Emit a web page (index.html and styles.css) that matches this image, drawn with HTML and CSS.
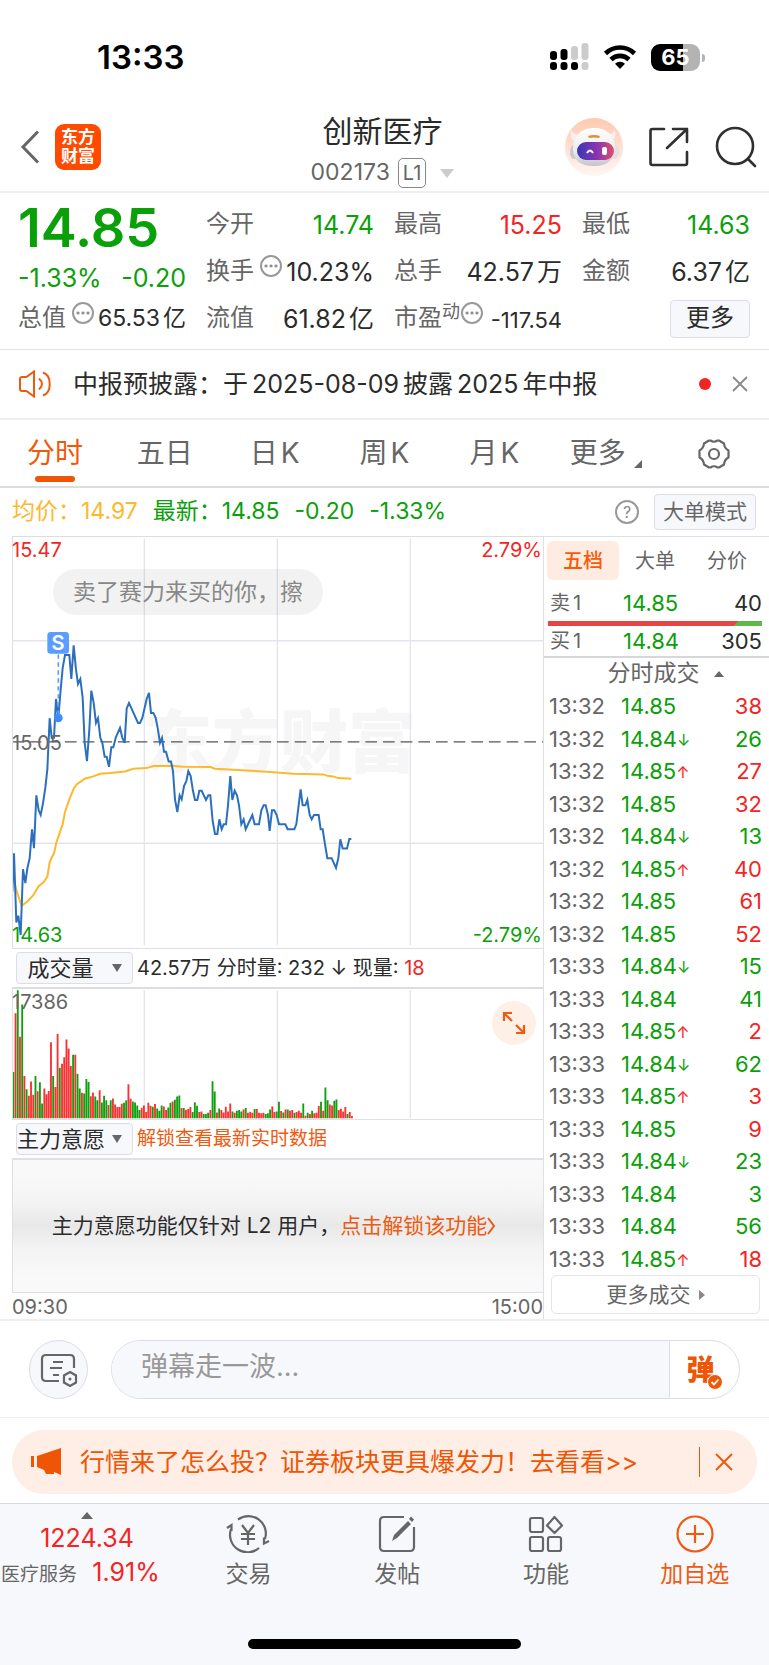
FILE: index.html
```html
<!DOCTYPE html>
<html lang="zh-CN">
<head>
<meta charset="utf-8">
<meta name="viewport" content="width=device-width, initial-scale=1">
<title>创新医疗 002173</title>
<link rel="stylesheet" href="styles.css">
</head>
<body>
<div class="status">
  <span class="clock">13:33</span>
  <div class="status-icons">
    <svg width="39" height="28" viewBox="0 0 39 28">
      <g fill="#000"><rect x="0" y="8" width="7" height="9" rx="3"/><rect x="10.500" y="6" width="7" height="11" rx="3"/><rect x="0" y="19" width="7" height="8" rx="3"/><rect x="10.500" y="19" width="7" height="8" rx="3"/><rect x="21" y="19" width="7" height="8" rx="3"/></g>
      <g fill="#ccc"><rect x="21" y="3" width="7" height="14" rx="3"/><rect x="31.500" y="0" width="7" height="17" rx="3"/><rect x="31.500" y="19" width="7" height="8" rx="3"/></g>
    </svg>
    <svg width="34" height="26" viewBox="0 0 34 26" fill="none" stroke="#000" stroke-width="4.600"><path d="M2.500 9.500a20.500 20.500 0 0 1 29 0M8 15.500a13 13 0 0 1 18 0"/><path d="M17 25l-5-5.300a7.500 7.500 0 0 1 10 0z" fill="#000" stroke="none"/></svg>
    <div class="battery"><span>65</span></div>
  </div>
</div>

<header class="header">
  <div class="head-left">
    <button class="icon-btn" aria-label="返回"><svg width="20" height="34" viewBox="0 0 20 34" fill="none" stroke="#666" stroke-width="3"><path d="M18 1.500L3 17l15 15.500"/></svg></button>
    <div class="logo">东方<br>财富</div>
  </div>
  <div class="head-title">
    <h1>创新医疗</h1>
    <div class="code"><span>002173</span><span class="level">L1</span><i class="tri-down pale"></i></div>
  </div>
  <div class="head-right">
    <button class="icon-btn" aria-label="智能助手">
      <svg width="58" height="58" viewBox="0 0 58 58">
        <defs>
          <linearGradient id="halo" x1="0" y1="0" x2="0" y2="1"><stop offset="0" stop-color="#ffc9b0"/><stop offset="1" stop-color="#fff6f2"/></linearGradient>
          <linearGradient id="visor" x1="0" y1="0" x2="1" y2="0"><stop offset="0" stop-color="#3a35b4"/><stop offset=".55" stop-color="#8a35b0"/><stop offset="1" stop-color="#e0506e"/></linearGradient>
          <linearGradient id="helmet" x1="0" y1="0" x2="0" y2="1"><stop offset="0" stop-color="#fff"/><stop offset=".6" stop-color="#ecebee"/><stop offset="1" stop-color="#c4c4cc"/></linearGradient>
        </defs>
        <circle cx="29" cy="29" r="29" fill="url(#halo)"/>
        <path d="M6 12q-2 9 5 12l5-7q-8 0-10-5zM50 12q2 9-5 12l-5-7q8 0 10-5z" fill="#f3f1f3"/>
        <ellipse cx="9" cy="34" rx="4" ry="7" fill="#c9c8d0"/><ellipse cx="50" cy="34" rx="4" ry="7" fill="#e2e0e5"/>
        <path d="M8 31C8 17 17 10 29 10s21 7 21 21c0 10-7 17-21 17S8 42 8 31z" fill="url(#helmet)"/>
        <rect x="12" y="24" width="37" height="18" rx="9" fill="url(#visor)"/>
        <path d="M23 18q6-2 12 0l-1 2q-5-1-10 0z" fill="#e78b3c"/>
        <path d="M22 35q3-5 6 0" fill="none" stroke="#fff" stroke-width="2"/><rect x="37" y="29" width="5" height="8" rx="2" fill="#fff"/>
      </svg>
    </button>
    <button class="icon-btn" aria-label="分享"><svg width="40" height="40" viewBox="0 0 40 40" fill="none" stroke="#303030" stroke-width="2.600" stroke-linecap="round" stroke-linejoin="round"><path d="M15 2H3.500Q1.500 2 1.500 4v32q0 2 2 2H36q2 0 2-2V25M24 2h14v13M38 2L18 21"/></svg></button>
    <button class="icon-btn" aria-label="搜索"><svg width="42" height="42" viewBox="0 0 42 42" fill="none" stroke="#303030" stroke-width="2.600" stroke-linecap="round"><circle cx="20" cy="20" r="18"/><path d="M33 33l7 7"/></svg></button>
  </div>
</header>

<section class="quote">
  <div class="q-col">
    <div class="price green">14.85</div>
    <div class="change green"><span>-1.33%</span><span>-0.20</span></div>
    <div class="cell compact"><span>总值</span><i class="dots"></i><b>65.53<i class="unit">亿</i></b></div>
  </div>
  <div class="q-col">
    <div class="cell"><span>今开</span><b class="green">14.74</b></div>
    <div class="cell"><span>换手</span><i class="dots"></i><b>10.23%</b></div>
    <div class="cell"><span>流值</span><b>61.82<i class="unit">亿</i></b></div>
  </div>
  <div class="q-col">
    <div class="cell"><span>最高</span><b class="red">15.25</b></div>
    <div class="cell"><span>总手</span><b>42.57<i class="unit">万</i></b></div>
    <div class="cell small"><span>市盈<sup>动</sup></span><i class="dots"></i><b>-117.54</b></div>
  </div>
  <div class="q-col">
    <div class="cell"><span>最低</span><b class="green">14.63</b></div>
    <div class="cell"><span>金额</span><b>6.37<i class="unit">亿</i></b></div>
    <div class="cell end"><button class="more-btn">更多</button></div>
  </div>
</section>

<section class="news">
  <svg width="34" height="28" viewBox="0 0 34 28" fill="none" stroke="#ee5a10" stroke-width="2"><path d="M15 1.500v25L7.500 21H3q-2 0-2-2V9q0-2 2-2h4.500zM20 8.500q6 5.500 0 11M24 2.500c9 3 9 20 0 23"/></svg>
  <p>中报预披露：于<span class="latin">2025-08-09</span>披露<span class="latin">2025</span>年中报</p>
  <i class="dot"></i>
  <button class="icon-btn" aria-label="关闭公告"><svg width="16" height="16" viewBox="0 0 16 16" stroke="#888" stroke-width="1.800"><path d="M1 1l14 14M15 1L1 15"/></svg></button>
</section>

<nav class="tabs">
  <button class="active">分时</button><button>五日</button><button>日<i class="unit">K</i></button><button>周<i class="unit">K</i></button><button>月<i class="unit">K</i></button>
  <button class="has-corner">更多<i class="corner"></i></button>
  <button aria-label="设置"><svg width="32" height="30" viewBox="0 0 32 30" fill="none" stroke="#666" stroke-width="2.200" stroke-linejoin="round"><path d="M11 1.500h1.500q3.500 2.500 7 0H21l5 3q.5 5 4.500 7v7q-4 2-4.500 7l-5 3h-1.500q-3.500-2.500-7 0H11l-5-3q-.5-5-4.500-7v-7q4-2 4.500-7z"/><circle cx="16" cy="15" r="5"/></svg></button>
</nav>

<section class="info">
  <span class="amber">均价：14.97</span>
  <span class="green">最新：14.85</span><span class="green">-0.20</span><span class="green">-1.33%</span>
  <button class="help" aria-label="帮助">?</button>
  <button class="mode">大单模式</button>
</section>

<main class="main">
  <div class="charts">
    <div class="pricechart">
      <span class="watermark">东方财富</span>
      <svg class="plot" viewBox="0 0 530 412" preserveAspectRatio="none">
        <g transform="translate(-13 -7) scale(.33333)" fill="none">
          <path d="M433 26V1248M832 26V1248M1231 26V1248M37 333H1630M37 942H1630" stroke="#e3e4ee" stroke-width="4"/>
          <path d="M36 637H1630" stroke="#555" stroke-width="3.500" stroke-dasharray="35 18"/>
          <polyline stroke="#fdb92e" stroke-width="6" points="42,1055 50,1085 58,1110 65,1130 82,1117 100,1098 115,1072 130,1060 142,1042 149,1000 155,985 162,973 169,940 188,885 195,848 208,810 221,778 230,765 254,748 280,741 300,733 330,731 375,726 400,718 440,716 460,710 515,709 550,712 632,713 645,718 700,721 800,727 880,733 970,735 985,740 1000,741 1015,746 1054,748"/>
          <polyline stroke="#2c70bd" stroke-width="6" points="37,1088 42,972 49,1180 55,1160 62,1218 69,1020 76,1062 82,1018 89,987 96,900 102,957 109,798 116,843 122,857 129,822 136,775 142,720 149,566 155,625 162,625 168,508 175,565 182,480 188,415 195,376 208,376 214,448 221,347 228,420 234,463 241,448 248,505 254,640 261,695 268,600 274,483 281,520 288,580 294,566 301,625 307,640 314,682 320,682 327,712 334,653 340,653 347,625 360,595 367,625 374,640 380,537 387,520 414,580 420,580 427,565 440,508 447,490 453,550 460,550 467,565 473,595 480,640 486,625 492,667 498,667 506,696 513,696 519,725 525,810 532,848 539,798 545,810 552,770 559,755 565,725 572,740 579,785 585,812 592,812 598,784 605,784 618,812 625,798 631,798 638,875 645,914 652,914 658,870 665,900 671,885 678,885 684,828 691,740 697,812 704,784 711,798 717,828 724,885 731,870 737,900 757,857 764,885 777,885 784,843 791,828 797,828 804,857 809,905 816,843 823,843 830,857 837,885 856,885 863,900 883,900 889,885 896,828 902,780 908,828 916,828 922,812 929,857 935,870 942,857 956,857 962,900 968,900 975,945 982,987 995,987 1008,1016 1015,987 1021,930 1028,958 1041,958 1048,929 1054,929"/>
          <path d="M175 374V560" stroke="#5b9dff" stroke-width="5" stroke-dasharray="13 11"/>
          <circle cx="175" cy="565" r="13" fill="#3f8cf8"/>
          <rect x="142" y="307" width="65" height="65" rx="10" fill="#5b9dff"/>
          <text x="174" y="362" class="mark">S</text>
        </g>
      </svg>
      <span class="lab tl red">15.47</span><span class="lab tr red">2.79%</span>
      <span class="lab ml">15.05</span>
      <span class="lab bl green">14.63</span><span class="lab br green">-2.79%</span>
      <span class="bubble">卖了赛力来买的你，擦</span>
    </div>
    <div class="subhead">
      <label class="pick"><select aria-label="指标一"><option>成交量</option></select></label>
      <span class="stat">42.57万 分时量: 232 ↓ 现量: <em class="red">18</em></span>
    </div>
    <div class="volchart">
      <svg class="plot" viewBox="0 0 530 131" preserveAspectRatio="none">
        <g transform="translate(-13 -48) scale(.33333)" fill="none">
          <path d="M433 148V535M832 148V535M1231 148V535" stroke="#e3e4ee" stroke-width="4"/>
          <path id="vol-up" stroke="#fb3131" stroke-width="5.600"/>
          <path id="vol-down" stroke="#0fa00f" stroke-width="5.600"/>
        </g>
      </svg>
      <span class="lab tl">17386</span>
      <button class="expand" aria-label="全屏"><svg width="24" height="24" viewBox="0 0 24 24" fill="none" stroke="#ee5a10" stroke-width="2.200"><path d="M10 2H2v8M2 2l8 8M14 22h8v-8M22 22l-8-8"/></svg></button>
    </div>
    <div class="subhead">
      <label class="pick"><select aria-label="指标二"><option>主力意愿</option></select></label>
      <a class="orange" href="#">解锁查看最新实时数据</a>
    </div>
    <div class="locked"><p>主力意愿功能仅针对 L2 用户，<a class="orange" href="#">点击解锁该功能<svg width="9" height="18" viewBox="0 0 9 18" fill="none" stroke="currentColor" stroke-width="2"><path d="M1 1l6 8-6 8"/></svg></a></p></div>
    <div class="times"><span>09:30</span><span>15:00</span></div>
  </div>

  <aside class="side">
    <div class="side-tabs"><button class="active">五档</button><button>大单</button><button>分价</button></div>
    <div class="level-row ask"><span>卖<i class="unit">1</i></span><b class="green">14.85</b><b>40</b></div>
    <div class="ratio"></div>
    <div class="level-row bid"><span>买<i class="unit">1</i></span><b class="green">14.84</b><b>305</b></div>
    <div class="deal-title">分时成交<i class="tri-up"></i></div>
    <table class="deals"><tbody>
      <tr><td>13:32</td><td>14.85</td><td class="red">38</td></tr>
      <tr><td>13:32</td><td>14.84<i class="down"></i></td><td class="green">26</td></tr>
      <tr><td>13:32</td><td>14.85<i class="up"></i></td><td class="red">27</td></tr>
      <tr><td>13:32</td><td>14.85</td><td class="red">32</td></tr>
      <tr><td>13:32</td><td>14.84<i class="down"></i></td><td class="green">13</td></tr>
      <tr><td>13:32</td><td>14.85<i class="up"></i></td><td class="red">40</td></tr>
      <tr><td>13:32</td><td>14.85</td><td class="red">61</td></tr>
      <tr><td>13:32</td><td>14.85</td><td class="red">52</td></tr>
      <tr><td>13:33</td><td>14.84<i class="down"></i></td><td class="green">15</td></tr>
      <tr><td>13:33</td><td>14.84</td><td class="green">41</td></tr>
      <tr><td>13:33</td><td>14.85<i class="up"></i></td><td class="red">2</td></tr>
      <tr><td>13:33</td><td>14.84<i class="down"></i></td><td class="green">62</td></tr>
      <tr><td>13:33</td><td>14.85<i class="up"></i></td><td class="red">3</td></tr>
      <tr><td>13:33</td><td>14.85</td><td class="red">9</td></tr>
      <tr><td>13:33</td><td>14.84<i class="down"></i></td><td class="green">23</td></tr>
      <tr><td>13:33</td><td>14.84</td><td class="green">3</td></tr>
      <tr><td>13:33</td><td>14.84</td><td class="green">56</td></tr>
      <tr><td>13:33</td><td>14.85<i class="up"></i></td><td class="red">18</td></tr>
    </tbody></table>
    <button class="more-deals">更多成交<i class="tri-right"></i></button>
  </aside>
</main>

<section class="danmu">
  <button class="danmu-set" aria-label="弹幕设置"><svg width="38" height="34" viewBox="0 0 38 34" fill="none" stroke="#666" stroke-width="2.200"><path d="M19 28H6q-4 0-4-4V6q0-4 4-4h24q4 0 4 4v9M13 9h10M10 15h12M13 22h6"/><path d="M30 19l6 3.500v7L30 33l-6-3.500v-7z"/><circle cx="30" cy="26" r="1.500" fill="#666" stroke="none"/></svg></button>
  <div class="danmu-box">
    <input type="text" aria-label="弹幕" placeholder="弹幕走一波...">
    <button aria-label="弹幕开关"><span class="dan">弹<svg width="16" height="16" viewBox="0 0 16 16"><circle cx="8" cy="8" r="7.500" fill="#ee5a0a" stroke="#fff"/><path d="M4.500 8l2.500 2.500 4.500-5" fill="none" stroke="#fff" stroke-width="1.800"/></svg></span></button>
  </div>
</section>

<section class="promo">
  <div class="banner">
    <svg width="31" height="28" viewBox="0 0 31 28" fill="#ee5504"><path d="M0 8h3v11H0zM6 8L30 0v27l-7-3v2h-8l-2-4-7-3z"/></svg>
    <a href="#">行情来了怎么投？证券板块更具爆发力！去看看&gt;&gt;</a>
    <i class="bar"></i>
    <button class="icon-btn" aria-label="关闭"><svg width="18" height="18" viewBox="0 0 18 18" stroke="#ee5504" stroke-width="1.800"><path d="M1 1l16 16M17 1L1 17"/></svg></button>
  </div>
</section>

<footer class="footer">
  <nav class="bottom">
    <a class="index" href="#"><i class="tri-up"></i><strong class="red">1224.34</strong><span>医疗服务 <em class="red">1.91%</em></span></a>
    <a href="#"><svg width="44" height="38" viewBox="0 0 44 38" fill="none" stroke="#666" stroke-width="2.200"><path d="M12 4.500A17.500 17.500 0 0 1 39 24M33 33A17.500 17.500 0 0 1 5 14"/><path d="M1 13l4.500-3v6M43 26l-5 2.500v-6"/><path d="M16 10l6 8 6-8M15 19h14M15 24h14M22 18v12"/></svg>交易</a>
    <a href="#"><svg width="38" height="38" viewBox="0 0 38 38" fill="none" stroke="#666" stroke-width="2.200"><path d="M26 2H6Q2 2 2 6v26q0 4 4 4h26q4 0 4-4V12"/><path d="M14 26l2-6L30 6l3 3-14 14zM31 4l2-2.500 3 3L34 7z" fill="#666" stroke="none"/></svg>发帖</a>
    <a href="#"><svg width="36" height="38" viewBox="0 0 36 38" fill="none" stroke="#666" stroke-width="2.200" stroke-linejoin="round"><rect x="2" y="3" width="13" height="14" rx="2"/><rect x="2" y="22" width="13" height="14" rx="2"/><rect x="20" y="22" width="13" height="14" rx="2"/><path d="M26.500 2l7.500 8.500-7.500 7.500-7.500-7.500z"/></svg>功能</a>
    <a class="orange" href="#"><svg width="38" height="38" viewBox="0 0 38 38" fill="none" stroke="#ee5a10" stroke-width="2.200"><circle cx="19" cy="19" r="17.500"/><path d="M19 10v18M10 19h18"/></svg>加自选</a>
  </nav>
  <div class="home"></div>
</footer>
<script src="app.js"></script>
</body>
</html>
```

FILE: styles.css
```css
* { box-sizing: border-box; }
body {
  margin: 0;
  background: #fff;
  color: #2b2b2b;
  font: 400 24px/1.2 Inter, "Noto Sans CJK SC", sans-serif;
}
button, input, select { font: inherit; color: inherit; background: none; border: 0; padding: 0; margin: 0; }
svg { display: block; flex: none; }
a { color: inherit; text-decoration: none; }
i, em { font-style: normal; }
b { font-weight: 400; }
h1, p { margin: 0; font-weight: 400; }
.green { color: #0aa00a; }
.red { color: #f52424; }
.amber { color: #fdb92e; }
.orange { color: #ee5a10; }
.icon-btn { display: flex; }
.unit { margin-left: 3px; }
.latin { margin: 0 4px; }

.tri-down, .tri-up, .tri-right { display: inline-block; border: 7px solid transparent; }
.tri-down { border-top: 9px solid #666; border-bottom: 0; }
.tri-down.pale { border-top-color: #ccc; }
.tri-up { border-width: 0 6px 7px; border-bottom-color: #666; }
.tri-right { border-width: 5px 0 5px 6px; border-left-color: #888; }

.status { display: flex; justify-content: space-between; align-items: center; height: 102px; padding: 12px 65px 0 97px; }
.clock { padding-top: 2px; font-size: 33px; font-weight: 600; color: #000; }
.status-icons { display: flex; align-items: center; gap: 14px; }
.battery {
  position: relative;
  display: flex; align-items: center; justify-content: center;
  width: 49px; height: 27px; margin-right: 4px; border-radius: 9px;
  background: linear-gradient(90deg, #000 65%, #b3b3b3 65%);
  color: #fff; font-size: 22px; font-weight: 700;
}
.battery::after { content: ""; position: absolute; right: -5px; top: 10px; width: 3px; height: 8px; border-radius: 0 3px 3px 0; background: #b3b3b3; }

.header { display: grid; grid-template-columns: 1fr auto 1fr; align-items: center; height: 91px; padding: 0 16px 0 12px; border-bottom: 2px solid #eee; }
.head-left { display: flex; align-items: center; gap: 15px; padding-left: 8px; }
.logo { width: 46px; height: 46px; padding-top: 4px; border-radius: 9px; background: #ff4a00; color: #fff; font-size: 17px; font-weight: 700; line-height: 19px; text-align: center; }
.head-title { display: flex; flex-direction: column; align-items: center; gap: 5px; padding-top: 4px; }
.head-title h1 { font-size: 30px; line-height: 44px; }
.code { display: flex; align-items: center; color: #666; font-size: 23px; }
.level { margin: 0 14px 0 8px; padding: 0 4px; border: 1px solid #888; border-radius: 5px; font-size: 20px; line-height: 28px; }
.head-right { display: flex; align-items: center; justify-content: flex-end; gap: 26px; margin-right: -4px; }

.quote { display: grid; grid-template-columns: repeat(4, minmax(0, 1fr)); gap: 20px; padding: 8px 19px 7px 18px; border-bottom: 1px solid #e2e2e2; }
.price { height: 54px; font-size: 54px; line-height: 54px; font-weight: 600; }
.change { display: flex; justify-content: space-between; height: 40px; padding-top: 7px; line-height: 32px; font-size: 25px; }
.cell { display: flex; align-items: center; height: 47px; white-space: nowrap; }
.cell span { color: #666; }
.cell b { margin-left: auto; font-size: 25px; }
.compact b { font-size: 23px; }
.small b { padding-top: 3px; font-size: 22px; }
.cell sup { font-size: 18px; line-height: 0; vertical-align: 8px; }
.dots { flex: none; width: 22px; height: 22px; margin: -11px 0 0 6px; border: 2px solid #999; border-radius: 50%; background: radial-gradient(circle, #888 1px, transparent 2px) 50% 50% / 5px 18px; background-clip: content-box; padding: 0 2px; }
.small .dots { margin-left: 1px; }
.end { justify-content: flex-end; }
.more-btn { width: 80px; height: 38px; border: 1px solid #dcdde5; border-radius: 4px; background: #f7f8fb; }

.news { display: flex; align-items: center; height: 70px; padding: 0 21px 0 19px; border-bottom: 2px solid #eee; }
.news p { flex: 1; padding-left: 20px; font-size: 25px; white-space: nowrap; }
.dot { width: 12px; height: 12px; margin-right: 21px; border-radius: 50%; background: #f52424; }

.tabs { display: grid; grid-template-columns: repeat(7, 1fr); height: 68px; border-bottom: 2px solid #dcdde2; color: #666; font-size: 28px; }
.tabs button { position: relative; display: flex; align-items: center; justify-content: center; padding-top: 2px; white-space: nowrap; }
.tabs .active { color: #ee5a0a; }
.tabs .active::after { content: ""; position: absolute; left: calc(50% - 20px); bottom: 4px; width: 40px; height: 6px; border-radius: 3px; background: #ee5504; }
.tabs .has-corner { padding-left: 3px; }
.corner { margin: 20px 0 0 8px; border: 4px solid transparent; border-right-color: #666; border-bottom-color: #666; }

.info { display: flex; align-items: center; gap: 15px; height: 48px; padding: 0 13px 0 12px; font-size: 23px; white-space: nowrap; }
.help { width: 24px; height: 24px; margin-left: auto; border: 2px solid #999; border-radius: 50%; color: #888; font-size: 16px; line-height: 20px; }
.mode { width: 102px; height: 36px; border: 1px solid #dcdde5; border-radius: 4px; background: #f7f8fb; color: #666; font-size: 21px; }

.main { display: grid; grid-template-columns: minmax(0, 1fr) 226px; padding-left: 12px; border-bottom: 2px solid #eee; }
.charts { border-top: 1px solid #dcdde2; }
.plot { position: relative; width: 100%; height: 100%; }
.pricechart, .volchart { position: relative; border: 1px solid #dfe0e6; border-width: 0 0 1px 1px; }
.pricechart { height: 412px; }
.volchart { height: 133px; border-top: 2px solid #dcdde2; }
.watermark { position: absolute; left: 131px; top: 160px; color: #f6f6f6; font-size: 68px; line-height: 90px; font-weight: 900; }
.mark { fill: #fff; font-size: 60px; font-weight: 600; text-anchor: middle; }
.lab { position: absolute; font-size: 20px; line-height: 22px; }
.lab:not(.red):not(.green) { color: #666; }
.tl { left: -1px; top: 2px; }
.tr { right: 1px; top: 2px; }
.ml { left: -1px; top: 195px; }
.bl { left: -1px; bottom: 2px; }
.br { right: 1px; bottom: 2px; }
.bubble { position: absolute; left: 40px; top: 32px; padding: 0 20px; border-radius: 24px; background: rgba(0, 0, 0, .05); color: #888; font-size: 23px; line-height: 46px; }
.subhead { display: flex; align-items: center; gap: 4px; height: 38px; padding-left: 4px; font-size: 19px; white-space: nowrap; }
.stat { font-size: 20px; }
.pick { position: relative; flex: none; }
.pick select { appearance: none; display: block; width: 117px; height: 32px; padding-right: 28px; border: 1px solid #dcdde5; border-radius: 4px; background: #f7f8fb; font-size: 22px; text-align-last: center; }
.pick::after { content: ""; position: absolute; right: 11px; top: 12px; border: 5px solid transparent; border-top: 8px solid #666; border-bottom: 0; }
.expand { position: absolute; right: 7px; top: 12px; display: flex; align-items: center; justify-content: center; width: 44px; height: 44px; border-radius: 50%; background: #feefe7; }
.locked { display: flex; align-items: center; justify-content: center; height: 135px; padding-right: 8px; border: 1px solid #dfe0e6; border-width: 2px 0 1px 1px; background: linear-gradient(#f9f9f9 10%, #f4f4f4 32%, #e8e8e8 50%, #f4f4f4 68%, #f9f9f9 90%); font-size: 21px; white-space: nowrap; }
.locked p, .locked a { display: flex; align-items: center; }
.times { display: flex; justify-content: space-between; height: 26px; color: #666; font-size: 20px; line-height: 29px; }

.side { display: flex; flex-direction: column; border: 1px solid #dfe0e6; border-width: 1px 0 0 1px; font-size: 22px; }
.side-tabs { display: grid; grid-template-columns: repeat(3, 72px); height: 44px; margin: 4px 0 0 3px; color: #666; font-size: 20px; }
.side-tabs button { height: 39px; border-radius: 6px; }
.side-tabs .active { background: #feece3; color: #fb5a05; font-weight: 500; }
.level-row { display: grid; grid-template-columns: 73px 1fr auto; align-items: center; padding: 0 7px 0 6px; line-height: 26px; }
.level-row span { color: #666; font-size: 20px; }
.ask { height: 36px; }
.bid { height: 30px; }
.ratio { height: 5px; margin: 0 7px 0 4px; background: linear-gradient(135deg, transparent 3px, #5cb947 3px) right / 28px 5px no-repeat, #e64545; }
.deal-title { display: flex; align-items: center; justify-content: center; gap: 14px; height: 34px; padding-left: 18px; border-top: 2px solid #d5d7dc; color: #666; font-size: 23px; }
.deal-title .tri-up { border-width: 0 5px 6px; }
.deals { width: 100%; height: 585px; border-collapse: collapse; table-layout: fixed; }
.deals td { padding: 0; white-space: nowrap; line-height: 26px; }
.deals td:nth-child(1) { width: 77px; padding-left: 5px; color: #666; }
.deals td:nth-child(2) { color: #0aa00a; }
.deals td:nth-child(3) { width: 50px; padding-right: 7px; text-align: right; }
.up::before, .down::before { font-size: 16px; line-height: 16px; vertical-align: 1px; }
.up::before { content: "↑"; color: #f52424; }
.down::before { content: "↓"; }
.more-deals { display: flex; align-items: center; justify-content: center; gap: 8px; height: 39px; margin: 0 9px 5px 7px; border: 1px solid #e6e6e8; border-radius: 5px; color: #666; font-size: 21px; }

.danmu { display: flex; gap: 23px; padding: 19px 29px 18px; border-bottom: 1px solid #eee; }
.danmu-set { display: flex; align-items: center; justify-content: center; width: 59px; height: 59px; border: 1px solid #dcdde5; border-radius: 50%; background: #f7f8fb; }
.danmu-box { display: flex; flex: 1; height: 59px; border: 1px solid #dcdde5; border-radius: 30px; overflow: hidden; }
.danmu-box input { flex: 1; min-width: 0; padding: 0 29px 4px; background: #f7f8fb; font-size: 27px; }
.danmu-box input::placeholder { color: #999; opacity: 1; }
.danmu-box button { width: 70px; padding-right: 8px; border-left: 1px solid #dcdde5; }
.dan { position: relative; display: inline-block; color: #ee5504; font-size: 28px; line-height: 34px; font-weight: 900; }
.dan svg { position: absolute; right: -8px; bottom: -3px; }

.promo { padding: 12px 12px 9px; }
.banner { display: flex; align-items: center; height: 64px; padding: 0 24px 0 19px; border-radius: 32px; background: #feeee6; color: #ee5504; font-size: 25px; white-space: nowrap; }
.banner a { flex: 1; padding-left: 18px; }
.bar { width: 1px; height: 30px; margin-right: 15px; background: #ee5504; }

.footer { height: 162px; border-top: 1px solid #d8dade; background: #f7f8fb; }
.bottom { display: grid; grid-template-columns: 174px repeat(4, 1fr); height: 135px; color: #666; font-size: 23px; }
.bottom a { display: flex; flex-direction: column; align-items: center; gap: 8px; padding-top: 11px; }
.bottom .orange { color: #ee5a10; }
.bottom .index { gap: 4px; padding-top: 8px; white-space: nowrap; }
.index strong { font-weight: 400; font-size: 25px; }
.index span { font-size: 19px; align-self: flex-start; padding-left: 1px; }
.index em { margin-left: 10px; font-size: 25px; }
.home { width: 273px; height: 10px; margin: 0 auto; border-radius: 5px; background: #000; }
```

FILE: app.js
```js
// Minute volume: a letter for the direction (r up, g down) and the y of the bar's top.
const bars = ("g395 r217 g148 r288 g191 r407 g447 r467 r424 r464 g407 r453 g426 g490 r445 r462 r452 r305 g407 r440 " +
  "r280 g382 r370 r350 r297 r324 r377 g343 r343 g400 g445 r458 g460 g416 g425 r468 r457 g469 g480 r450 " +
  "g487 g467 g480 r495 g480 r475 r493 r501 r501 r491 g488 g480 r432 r476 g484 g487 g496 g510 r503 r496 " +
  "r516 r488 r497 g500 r492 g505 g512 g496 r499 r510 g502 g488 r484 g479 g469 g466 r504 g504 r510 r507 " +
  "r501 g516 g486 g497 r516 r514 g522 g522 g518 r510 g423 g454 r517 g505 r510 r517 r500 r514 r490 g514 " +
  "r518 g512 g510 g514 r508 g504 r518 r515 r518 g507 r507 r518 r520 r518 g522 g520 g508 r499 r516 g514 " +
  "g485 r513 g517 r508 g508 r512 r510 g518 r516 r512 r518 g490 r527 g518 r522 g512 r520 r518 r498 g485 " +
  "r512 g442 g480 r493 r496 g482 g478 r510 r506 r514 r501 g522 r516 r528").split(" ");
const paths = { r: "", g: "" };
bars.forEach((bar, i) => {
  paths[bar[0]] += `M${(40 + i * 6.64).toFixed(1)} 535V${bar.slice(1)}`;
});
document.getElementById("vol-up").setAttribute("d", paths.r);
document.getElementById("vol-down").setAttribute("d", paths.g);
```
